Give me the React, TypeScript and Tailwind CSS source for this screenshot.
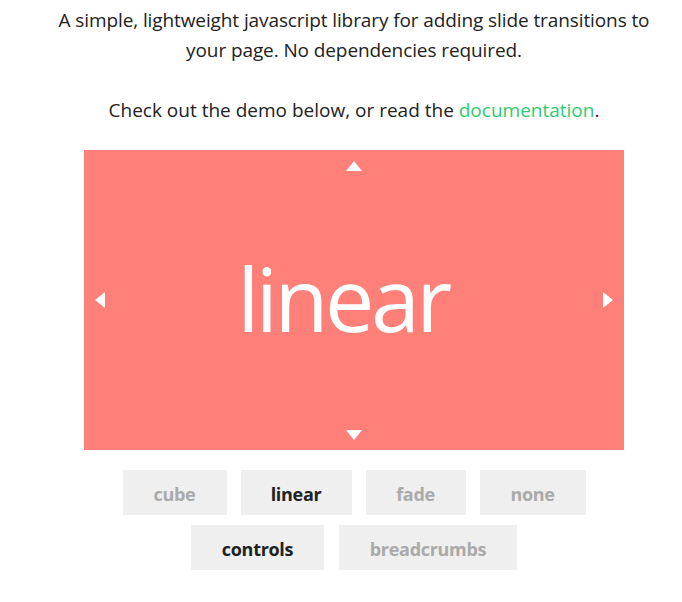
import React from "react";

const TRANSITIONS = [
  { label: "cube", active: false, w: "w-[104px]" },
  { label: "linear", active: true, w: "w-[111px]" },
  { label: "fade", active: false, w: "w-[100px]" },
  { label: "none", active: false, w: "w-[106px]" },
];

const OPTIONS = [
  { label: "controls", active: true, w: "w-[133px]" },
  { label: "breadcrumbs", active: false, w: "w-[178px]" },
];

function Tri({ dir }: { dir: "up" | "down" | "left" | "right" }) {
  const pts = {
    up: "8,0 16,10 0,10",
    down: "0,0 16,0 8,10",
    left: "10,0 10,16 0,8",
    right: "0,0 10,8 0,16",
  }[dir];
  const vertical = dir === "up" || dir === "down";
  return (
    <svg width={vertical ? 16 : 10} height={vertical ? 10 : 16} viewBox={vertical ? "0 0 16 10" : "0 0 10 16"}>
      <polygon points={pts} fill="#fff" />
    </svg>
  );
}

function Button({ label, active, w }: { label: string; active: boolean; w: string }) {
  return (
    <button
      className={`${w} h-[45px] pt-[3px] bg-[#efefef] text-[18px] font-bold tracking-[-0.3px] ${
        active ? "text-[#222]" : "text-[#aaa]"
      }`}
    >
      {label}
    </button>
  );
}

export default function App() {
  return (
    <div className="w-[682px] h-[602px] bg-white font-['Open_Sans',sans-serif] text-[#222]">
      <div className="pt-[5px] pl-[26px] flex flex-col items-center">
        <p className="text-[19px] leading-[30px] text-center w-[620px] tracking-[-0.1px]">
          A simple, lightweight javascript library for adding slide transitions to your page. No dependencies required.
        </p>
        <p className="mt-[30px] text-[19px] leading-[30px] text-center">
          Check out the demo below, or read the <span className="text-[#2ecc71]">documentation</span>.
        </p>

        <div className="relative mt-[25px] w-[540px] h-[300px] bg-[#ff7f79] flex items-center justify-center">
          <span className="text-white text-[88px] leading-none tracking-[-3.5px] pb-[4px] pr-[22px]">
            linear
          </span>
          <div className="absolute top-[11px] left-[262px] flex">
            <Tri dir="up" />
          </div>
          <div className="absolute bottom-[10px] left-[262px] flex">
            <Tri dir="down" />
          </div>
          <div className="absolute left-[11px] top-[142px] flex">
            <Tri dir="left" />
          </div>
          <div className="absolute right-[11px] top-[142px] flex">
            <Tri dir="right" />
          </div>
        </div>

        <div className="mt-[20px] flex gap-[14px]">
          {TRANSITIONS.map((t) => (
            <Button key={t.label} {...t} />
          ))}
        </div>
        <div className="mt-[10px] flex gap-[15px]">
          {OPTIONS.map((t) => (
            <Button key={t.label} {...t} />
          ))}
        </div>
      </div>
    </div>
  );
}
